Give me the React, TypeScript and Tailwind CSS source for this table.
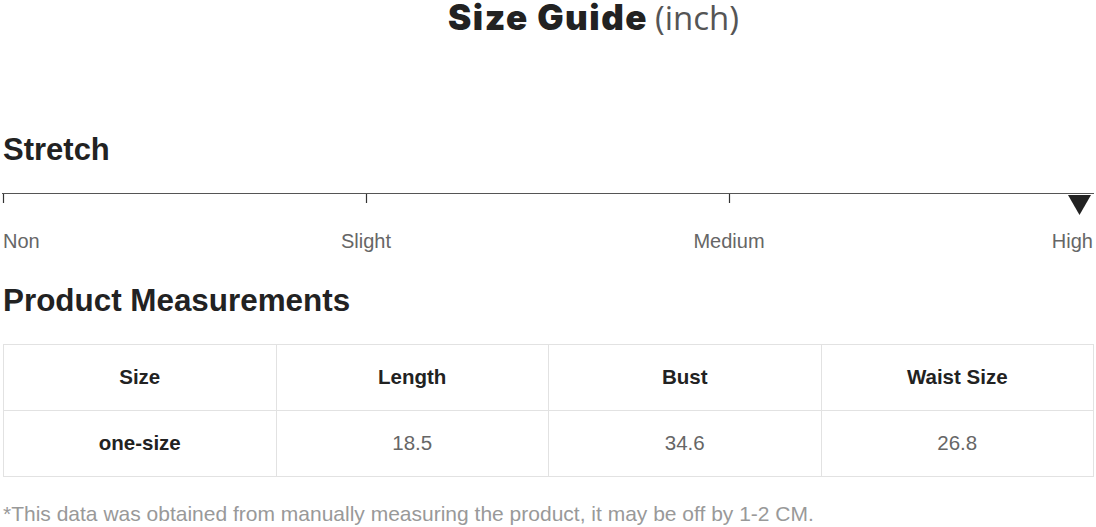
const rows = [{ size: "one-size", length: "18.5", bust: "34.6", waist: "26.8" }];

export default function App() {
  return (
    <div className="h-[527px] w-[1096px] overflow-hidden bg-white font-['Liberation_Sans',Arial,sans-serif]">
      {/* Title: "Size Guide" is centred, the unit hangs off to its right */}
      <div className="grid h-[35px] grid-cols-[1fr_auto_1fr] items-baseline">
        <span />
        <span className="font-['Inter',sans-serif] text-[35px] leading-[35px] font-black tracking-[1.5px] text-[#222]">
          Size Guide
        </span>
        <span className="ml-[7px] font-['Open_Sans',sans-serif] text-[33px] leading-[35px] text-[#555]">
          (inch)
        </span>
      </div>

      {/* Stretch */}
      <h2 className="mt-[99px] px-[3px] text-[31px] leading-[32px] font-bold text-[#222]">Stretch</h2>
      <svg className="mt-[27px] block" width="1096" height="24" viewBox="0 0 1096 24">
        <line x1="2" y1="0.5" x2="1094" y2="0.5" stroke="#555" strokeWidth="1" />
        <line x1="3.5" y1="1" x2="3.5" y2="10" stroke="#333" strokeWidth="1.2" />
        <line x1="366.5" y1="1" x2="366.5" y2="10" stroke="#333" strokeWidth="1.2" />
        <line x1="729.5" y1="1" x2="729.5" y2="10" stroke="#333" strokeWidth="1.2" />
        <polygon points="1068,2 1091,2 1079.5,22" fill="#222" />
      </svg>
      <div className="mt-[12px] grid grid-cols-[181.5px_363px_363px_1fr] px-[3px] text-[20px] leading-[24px] text-[#666]">
        <span>Non</span>
        <span className="text-center">Slight</span>
        <span className="text-center">Medium</span>
        <span className="text-right">High</span>
      </div>

      {/* Product Measurements */}
      <h2 className="mt-[32px] px-[3px] text-[31.4px] leading-[32px] font-bold text-[#222]">Product Measurements</h2>
      <table className="mt-[27px] ml-[3px] w-[1091px] table-fixed border-collapse text-[20.5px]">
        <thead>
          <tr className="h-[66px]">
            {["Size", "Length", "Bust", "Waist Size"].map((h) => (
              <th key={h} className="border border-[#e2e2e2] text-center font-bold text-[#222]">
                {h}
              </th>
            ))}
          </tr>
        </thead>
        <tbody>
          {rows.map((r) => (
            <tr key={r.size} className="h-[66px]">
              <td className="border border-[#e2e2e2] text-center font-bold text-[#222]">{r.size}</td>
              <td className="border border-[#e2e2e2] text-center text-[#666]">{r.length}</td>
              <td className="border border-[#e2e2e2] text-center text-[#666]">{r.bust}</td>
              <td className="border border-[#e2e2e2] text-center text-[#666]">{r.waist}</td>
            </tr>
          ))}
        </tbody>
      </table>

      <p className="mt-[25px] px-[3px] text-[21px] leading-[24px] text-[#999]">
        *This data was obtained from manually measuring the product, it may be off by 1-2 CM.
      </p>
    </div>
  );
}
